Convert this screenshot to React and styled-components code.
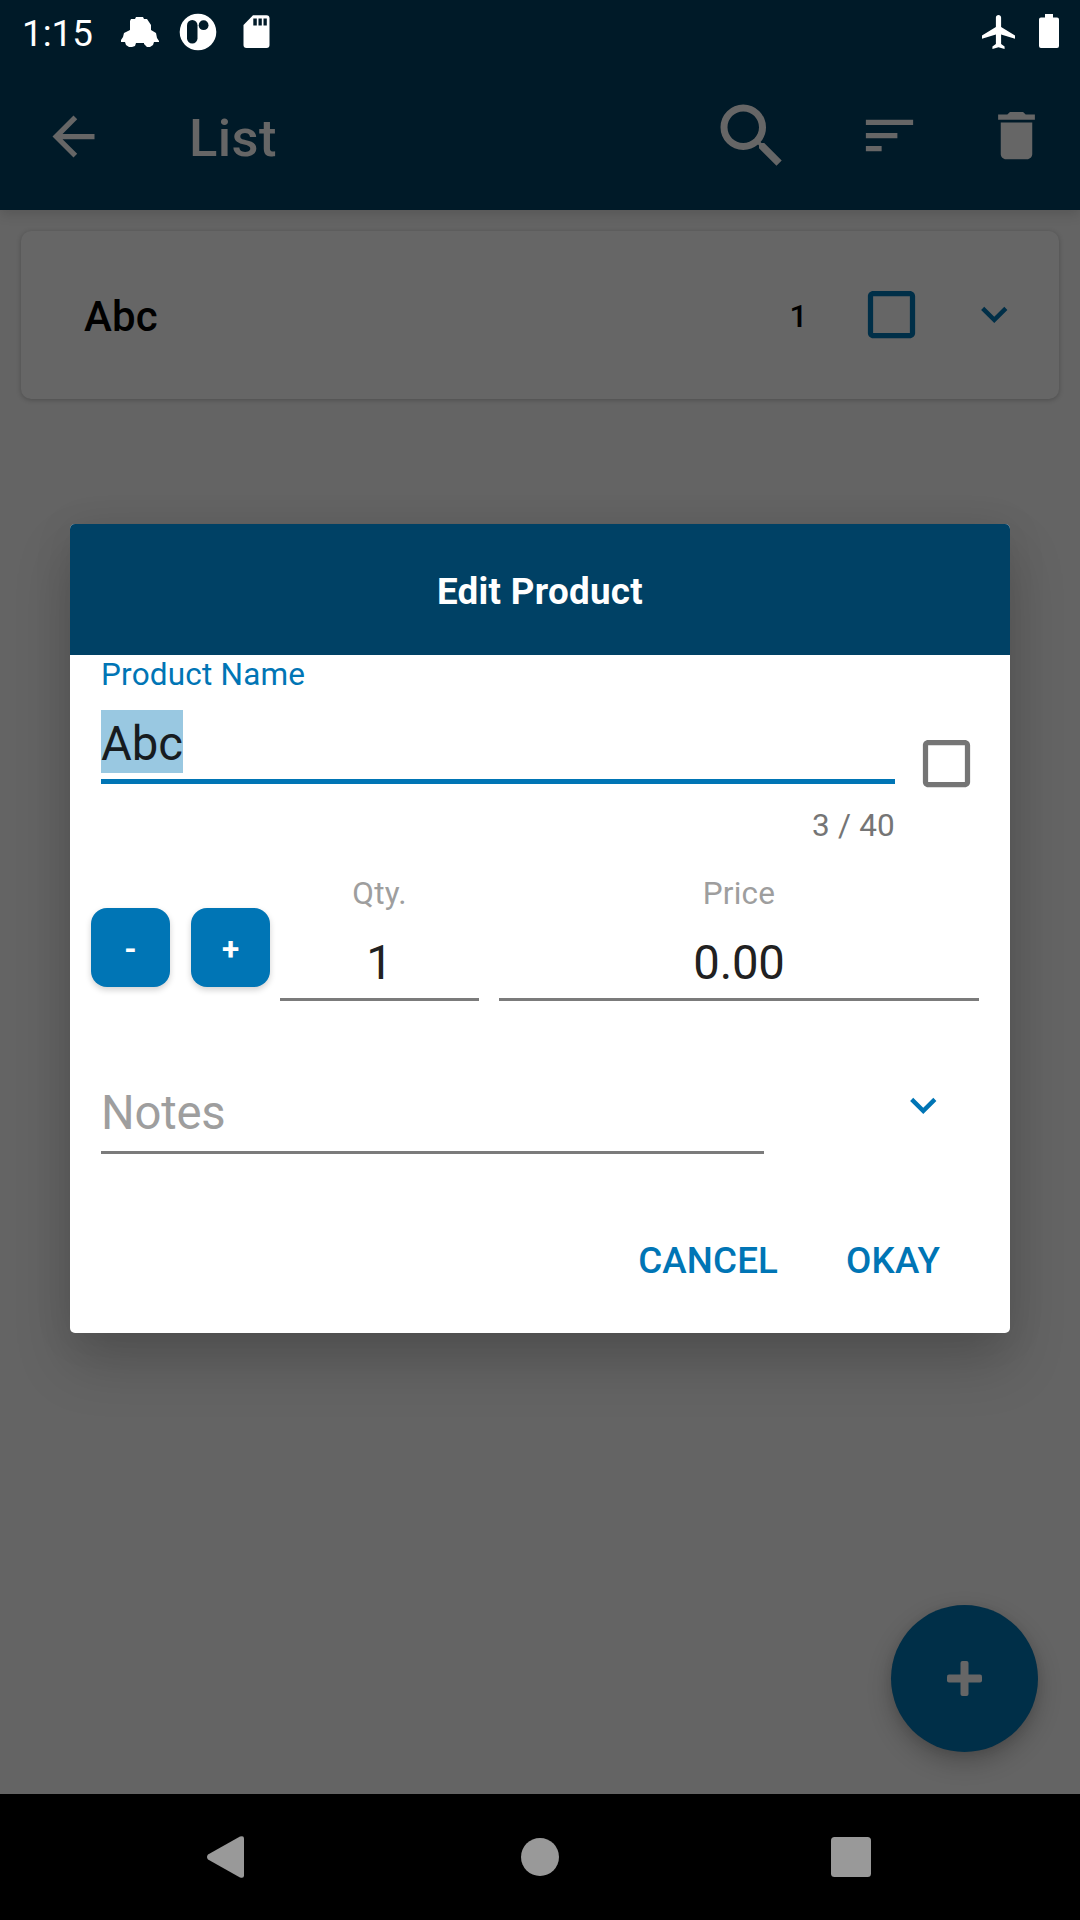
import React from "react";
import styled, { createGlobalStyle } from "styled-components";

const Global = createGlobalStyle`
  *, *::before, *::after { box-sizing: border-box; }
  body { margin: 0; background: #000; }
  svg { display: block; flex: none; }
`;

const Screen = styled.div`
  position: relative;
  display: flex;
  flex-direction: column;
  width: 1080px;
  height: 1920px;
  overflow: hidden;
  background: #646464;
  font-family: Roboto, sans-serif;
`;

const Header = styled.header`
  height: 210px;
  background: #001a28;
  box-shadow: 0 4px 12px rgba(0, 0, 0, 0.14);
`;

const StatusBar = styled.div`
  display: flex;
  justify-content: space-between;
  height: 63px;
  padding: 0 21px 0 22px;
`;

const StatusGroup = styled.div`
  display: flex;
`;

const Clock = styled.div`
  width: 99px;
  font-size: 36.75px;
  line-height: 67px;
  color: #fff;
`;

const Toolbar = styled.div`
  display: flex;
  align-items: flex-start;
  height: 147px;
  padding: 0 32px 0 42px;
  color: #666;
`;

const IconSlot = styled.div`
  flex: none;
  margin: ${(p) => p.$top || 0}px ${(p) => p.$right || 0}px 0 ${(p) => p.$left || 0}px;
  color: ${(p) => p.$color || "inherit"};
`;

const Title = styled.h1`
  flex: 1;
  margin: 41px 0 0 84px;
  font-size: 52.5px;
  font-weight: 500;
  letter-spacing: 0.4px;
  line-height: 68px;
`;

const Card = styled.section`
  display: flex;
  align-items: flex-start;
  height: 168px;
  margin: 21px 21px 0;
  padding: 0 39px 0 63px;
  border-radius: 10px;
  background: #666;
  box-shadow: 0 1px 5px rgba(0, 0, 0, 0.24);
`;

const ItemName = styled.div`
  flex: 1;
  font-size: 42px;
  font-weight: 500;
  letter-spacing: 0.2px;
  line-height: 172px;
  color: #000;
`;

const ItemCount = styled.div`
  margin-right: 52px;
  font-size: 31.5px;
  font-weight: 500;
  line-height: 172px;
  color: #000;
`;

const Content = styled.main`
  flex: 1;
  display: flex;
  flex-direction: column;
`;

const Fab = styled.div`
  display: flex;
  align-items: center;
  justify-content: center;
  align-self: flex-end;
  width: 147px;
  height: 147px;
  margin: auto 42px 42px 0;
  border-radius: 50%;
  background: #002f48;
  box-shadow: 0 10px 24px rgba(0, 0, 0, 0.24), 0 2px 10px rgba(0, 0, 0, 0.08);
`;

const NavBar = styled.nav`
  display: flex;
  align-items: center;
  height: 126px;
  padding-left: 207px;
  background: #000;
`;

const DialogLayer = styled.div`
  position: absolute;
  inset: 0;
  padding: 524px 70px 0;
`;

const Dialog = styled.div`
  height: 809px;
  overflow: hidden;
  border-radius: 5px;
  background: #fff;
`;

const DialogShadow = styled.div`
  border-radius: 5px;
  box-shadow: 0 30px 56px rgba(0, 0, 0, 0.18), 0 4px 40px rgba(0, 0, 0, 0.08);
`;

const DialogTitle = styled.h2`
  height: 131px;
  margin: 0;
  background: #004165;
  color: #fff;
  font-size: 36.75px;
  font-weight: 700;
  letter-spacing: 0.3px;
  line-height: 135px;
  text-align: center;
`;

const FormRow = styled.div`
  display: flex;
  align-items: flex-start;
  padding-left: ${(p) => p.$inset || 31}px;
  margin-top: ${(p) => p.$top || 0}px;
`;

const Field = styled.div`
  flex: none;
  width: ${(p) => p.$width}px;
  margin-left: ${(p) => p.$left || 0}px;
  text-align: ${(p) => p.$align || "left"};
`;

const Label = styled.div`
  height: 38px;
  font-size: 31.5px;
  letter-spacing: 0.2px;
  line-height: 40px;
  color: ${(p) => p.$color || "#9e9e9e"};
`;

const Value = styled.div`
  height: 63px;
  margin-top: ${(p) => p.$top || 0}px;
  padding-top: 3px;
  font-size: 47.25px;
  letter-spacing: -0.2px;
  line-height: 59px;
  color: ${(p) => p.$color || "#212121"};
`;

const SelectedValue = styled(Value)`
  width: 82px;
  padding-top: 5px;
  letter-spacing: 0;
  color: #171c1f;
  background: #99c8e1;
`;

const Underline = styled.div`
  height: ${(p) => (p.$active ? 5 : 3)}px;
  margin-top: ${(p) => p.$top}px;
  background: ${(p) => (p.$active ? "#0075b5" : "#7b7b7b")};
`;

const Counter = styled.div`
  height: 38px;
  margin-top: 22px;
  font-size: 31.5px;
  letter-spacing: 0.2px;
  line-height: 40px;
  text-align: right;
  color: #757575;
`;

const StepButton = styled.div`
  width: 79px;
  height: 79px;
  margin: 34px ${(p) => p.$right}px 0 0;
  border-radius: 16px;
  background: #0075b5;
  box-shadow: 0 3px 6px rgba(0, 0, 0, 0.18);
  color: #fff;
  font-size: 31.5px;
  font-weight: 700;
  line-height: 84px;
  text-align: center;
`;

const Actions = styled.div`
  display: flex;
  justify-content: flex-end;
  gap: 68px;
  margin-top: 85px;
  padding-right: 70px;
`;

const TextButton = styled.div`
  font-size: 36.75px;
  font-weight: 500;
  letter-spacing: 0.15px;
  line-height: 44px;
  color: #0075b5;
`;

const Glyph = ({ size, d }) => (
  <svg width={size} height={size} viewBox="0 0 24 24" fill="currentColor">
    <path d={d} />
  </svg>
);

const paths = {
  back: "M20 11H7.83l5.59-5.59L12 4l-8 8 8 8 1.41-1.41L7.83 13H20v-2z",
  search:
    "M15.5 14h-.79l-.28-.27A6.471 6.471 0 0 0 16 9.5 6.5 6.5 0 1 0 9.5 16c1.61 0 3.09-.59 4.23-1.57l.27.28v.79l5 4.99L20.49 19l-4.99-5zm-6 0C7.01 14 5 11.99 5 9.5S7.01 5 9.5 5 14 7.01 14 9.5 11.99 14 9.5 14z",
  sort: "M3 18h6v-2H3v2zM3 6v2h18V6H3zm0 7h12v-2H3v2z",
  trash: "M6 19c0 1.1.9 2 2 2h8c1.1 0 2-.9 2-2V7H6v12zM19 4h-3.5l-1-1h-5l-1 1H5v2h14V4z",
  expand: "M16.59 8.59 12 13.17 7.41 8.59 6 10l6 6 6-6z",
  checkbox:
    "M19 5v14H5V5h14m0-2H5c-1.1 0-2 .9-2 2v14c0 1.1.9 2 2 2h14c1.1 0 2-.9 2-2V5c0-1.1-.9-2-2-2z",
};

const CarIcon = () => (
  <svg width="38" height="30" viewBox="0 0 38 30" fill="#fff">
    <path d="M15 0h7l1 2h3l2 3 2 3v5l5 3 1 5 2 3v1h-5l-1 3-3 2h-3l-3-3v-1h-8l-1 3-3 1H8l-3-2-1-3H0v-2l2-3 1-4 6-3V4l1-2h4z" />
  </svg>
);

const BadgeIcon = () => (
  <svg width="38" height="38" viewBox="0 0 38 38">
    <circle cx="19" cy="19" r="18.3" fill="#fff" />
    <rect x="8" y="7" width="10.5" height="23.5" rx="5.2" fill="#001a28" />
    <circle cx="24.6" cy="12.2" r="4.9" fill="#001a28" />
  </svg>
);

const SdIcon = () => (
  <svg width="27" height="34" viewBox="0 0 27 34">
    <path d="M10 .3h13.5q3 0 3 3v26.7q0 3-3 3h-20q-3 0-3-3V10z" fill="#fff" />
    <path d="M10.3 3.5h3.5v7h-3.5zM15.5 3.5h3.3v7h-3.3zM20.5 3.5h3.3v7h-3.3z" fill="#001a28" />
  </svg>
);

const PlaneIcon = () => (
  <svg width="33" height="34" viewBox="2 2 19 20" preserveAspectRatio="none" fill="#fff">
    <path d="M21 16v-2l-8-5V3.5c0-.83-.67-1.5-1.5-1.5S10 2.67 10 3.5V9l-8 5v2l8-2.5V19l-2 1.5V22l3.5-1 3.5 1v-1.5L13 19v-5.5l8 2.5z" />
  </svg>
);

const BatteryIcon = () => (
  <svg width="20" height="34" viewBox="0 0 20 34" fill="#fff">
    <path d="M6 0h8v3.5h4q2 0 2 2V32q0 2-2 2H2q-2 0-2-2V5.5q0-2 2-2h4z" />
  </svg>
);

const PlusIcon = () => (
  <svg width="35" height="35" viewBox="0 0 35 35" fill="#666">
    <rect x="13.5" y="0" width="8" height="35" rx="2" />
    <rect x="0" y="13.5" width="35" height="8" rx="2" />
  </svg>
);

export default function App() {
  return (
    <Screen>
      <Global />
      <Header>
        <StatusBar>
          <StatusGroup>
            <Clock>1:15</Clock>
            <IconSlot $top={17}><CarIcon /></IconSlot>
            <IconSlot $top={13} $left={20}><BadgeIcon /></IconSlot>
            <IconSlot $top={15} $left={26}><SdIcon /></IconSlot>
          </StatusGroup>
          <StatusGroup>
            <IconSlot $top={14.5}><PlaneIcon /></IconSlot>
            <IconSlot $top={14} $left={24}><BatteryIcon /></IconSlot>
          </StatusGroup>
        </StatusBar>
        <Toolbar>
          <IconSlot $top={42}><Glyph size={63} d={paths.back} /></IconSlot>
          <Title>List</Title>
          <IconSlot $top={30.5}><Glyph size={84} d={paths.search} /></IconSlot>
          <IconSlot $top={41} $left={64}><Glyph size={63} d={paths.sort} /></IconSlot>
          <IconSlot $top={41} $left={64}><Glyph size={63} d={paths.trash} /></IconSlot>
        </Toolbar>
      </Header>

      <Content>
        <Card>
          <ItemName>Abc</ItemName>
          <ItemCount>1</ItemCount>
          <IconSlot $top={52.2} $color="#002f48">
            <Glyph size={63} d={paths.checkbox} />
          </IconSlot>
          <IconSlot $top={57.2} $left={45} $color="#002f48">
            <Glyph size={52.5} d={paths.expand} />
          </IconSlot>
        </Card>
        <Fab><PlusIcon /></Fab>
      </Content>

      <NavBar>
        <svg width="37" height="42" viewBox="0 0 37 42" fill="#999">
          <path d="M1 18.5 33 .6q4-1.5 4 2v36.8q0 3.5-4 2L1 23.5q-2-2.5 0-5z" />
        </svg>
        <IconSlot $left={277} $right={272}>
          <svg width="38" height="38" viewBox="0 0 38 38" fill="#999">
            <circle cx="19" cy="19" r="19" />
          </svg>
        </IconSlot>
        <svg width="40" height="40" viewBox="0 0 40 40" fill="#999">
          <rect width="40" height="40" rx="3.5" />
        </svg>
      </NavBar>

      <DialogLayer>
        <DialogShadow>
          <Dialog>
            <DialogTitle>Edit Product</DialogTitle>
            <FormRow>
              <Field $width={794}>
                <Label $color="#0075b5">Product Name</Label>
                <SelectedValue $top={17}>Abc</SelectedValue>
                <Underline $active $top={6} />
                <Counter>3 / 40</Counter>
              </Field>
              <IconSlot $top={77.2} $left={20.4} $color="#757575">
                <Glyph size={63} d={paths.checkbox} />
              </IconSlot>
            </FormRow>
            <FormRow $inset={21} $top={30}>
              <StepButton $right={21}>-</StepButton>
              <StepButton $right={10}>+</StepButton>
              <Field $width={199} $align="center">
                <Label>Qty.</Label>
                <Value $top={19}>1</Value>
                <Underline $top={4} />
              </Field>
              <Field $width={480} $left={20} $align="center">
                <Label>Price</Label>
                <Value $top={19}>0.00</Value>
                <Underline $top={4} />
              </Field>
            </FormRow>
            <FormRow $top={77}>
              <Field $width={663}>
                <Value $top={3} $color="#9e9e9e">Notes</Value>
                <Underline $top={7} />
              </Field>
              <IconSlot $left={133.4} $top={0.5} $color="#0075b5">
                <Glyph size={52.5} d={paths.expand} />
              </IconSlot>
            </FormRow>
            <Actions>
              <TextButton>CANCEL</TextButton>
              <TextButton>OKAY</TextButton>
            </Actions>
          </Dialog>
        </DialogShadow>
      </DialogLayer>
    </Screen>
  );
}
